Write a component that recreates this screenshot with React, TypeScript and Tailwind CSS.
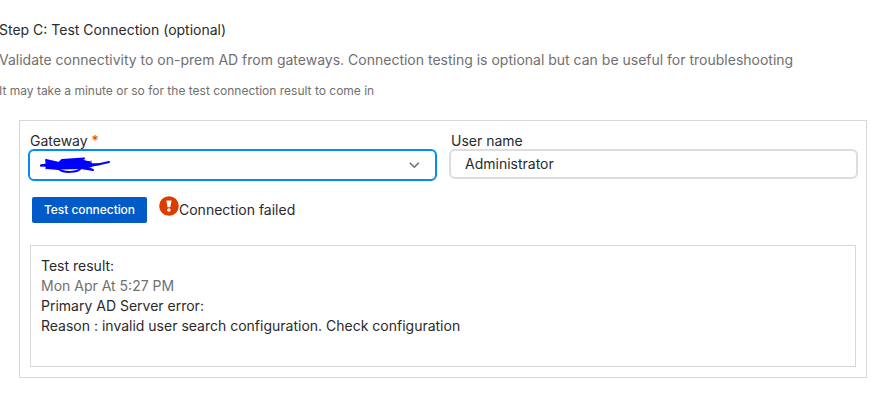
import { useState } from "react";

type TestResultProps = {
  date: string;
  title: string;
  reason: string;
};

const TestResult: React.FC<TestResultProps> = ({ date, title, reason }) => {
  return (
    <div className="mt-[22px] ml-[10px] mr-[10px] h-[122px] border border-[#d8d8dc] px-[10px] pt-[10px] leading-5">
      <p>Test result:</p>
      <p className="text-[#707070]">{date}</p>
      <p>{title}</p>
      <p>{reason}</p>
    </div>
  );
};

const Scribble = () => (
  <svg
    width="72"
    height="18"
    viewBox="0 0 72 18"
    fill="none"
    stroke="#0000ff"
    strokeWidth="2"
    strokeLinecap="round"
    strokeLinejoin="round"
  >
    <path d="M7 4v9M52 5v6" stroke="#1c1c50" strokeWidth="1" />
    <path d="M2 9.6 L10 8 L7 4 L20 7 L23 4 L45 2.5 L34 5 L50 6 L52 8 L60 8.3 L70 6" />
    <path d="M2 9.6 L12 10 L22 11 L8 12 L20 13 C24 17 39 17 42 12 L54 14 L46 11 L60 8.3" />
    <path
      d="M8 6 L20 8 L24 5 L42 4 L50 7 L52 10 L44 12 L22 12.5 L8 11 Z"
      fill="#0000ff"
    />
  </svg>
);

const App = () => {
  const [userName, setUserName] = useState("Administrator");

  return (
    <main className="h-[413px] overflow-hidden bg-white font-['Inter',sans-serif] text-[14px] text-[#2a2a2c]">
      <h1 className="-ml-px pt-5 leading-5">Step C: Test Connection (optional)</h1>
      <p className="mt-[10px] -ml-px leading-5 text-[#707070]">
        Validate connectivity to on-prem AD from gateways. Connection testing is
        optional but can be useful for troubleshooting
      </p>
      <p className="mt-[11px] -ml-px text-[12px] leading-5 text-[#707070]">
        It may take a minute or so for the test connection result to come in
      </p>

      <section className="mt-[19px] ml-[19px] h-[258px] w-[848px] border border-[#d8d8dc]">
        <div className="flex gap-3 pt-[10px] pl-2">
          <div className="w-[409px]">
            <p className="h-[18px] pl-[2px] leading-5">
              Gateway <span className="text-[#dc3c00]">*</span>
            </p>
            <button
              type="button"
              aria-label="Gateway"
              className="flex h-8 w-full items-center justify-between rounded-md border-2 border-[#008cff] pr-[15px] pl-[9px]"
            >
              <Scribble />
              <svg
                width="12"
                height="8"
                viewBox="0 0 12 8"
                fill="none"
                stroke="#6e6e78"
                strokeWidth="1.6"
              >
                <path d="M1.8 1.8 L6.3 6.2 L10.8 1.8" />
              </svg>
            </button>
          </div>
          <div className="w-[409px]">
            <p className="h-[18px] pl-[2px] leading-5">User name</p>
            <input
              type="text"
              value={userName}
              onChange={(e) => setUserName(e.target.value)}
              className="block h-[30px] w-full rounded-md border-2 border-[#dcdce1] px-[14px] pb-[2px]"
            />
          </div>
        </div>

        <div className="mt-4 flex h-[26px] pl-3">
          <button
            type="button"
            className="h-[26px] w-[115px] rounded-xs bg-[#005ac8] text-[12px] font-medium tracking-[-0.06px] text-white"
          >
            Test connection
          </button>
          <svg
            className="-mt-px ml-3"
            width="20"
            height="20"
            viewBox="0 0 20 20"
          >
            <circle cx="10" cy="10" r="9.8" fill="#dc3c00" />
            <path d="M7.3 4.5h5.2l-1.2 6.7H8.5z" fill="#fff" />
            <circle cx="9.9" cy="14" r="1.8" fill="#fff" />
          </svg>
          <span className="leading-[26px]">Connection failed</span>
        </div>

        <TestResult
          date="Mon Apr At 5:27 PM"
          title="Primary AD Server error:"
          reason="Reason : invalid user search configuration. Check configuration"
        />
      </section>
    </main>
  );
};

export default App;
